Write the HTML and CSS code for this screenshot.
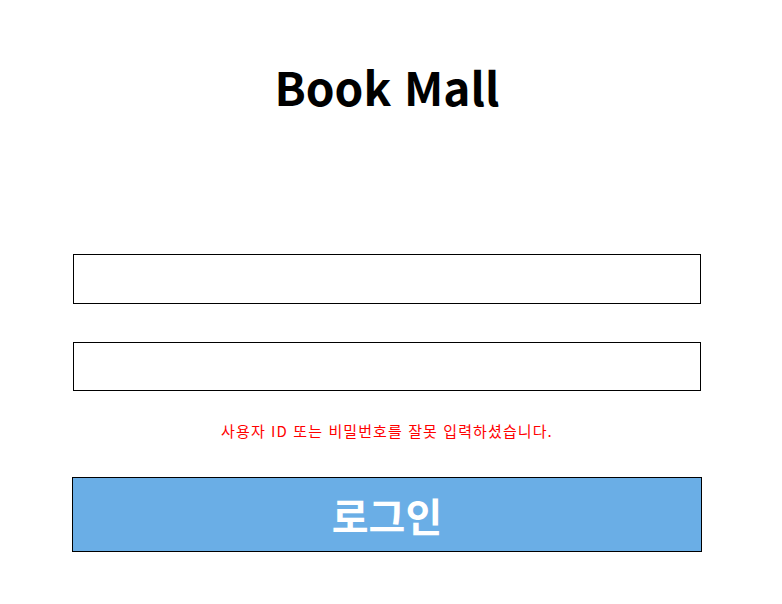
FILE: index.html
```html
<!DOCTYPE html>
<html lang="ko">
<head>
<meta charset="utf-8">
<title>Book Mall</title>
<link rel="stylesheet" href="styles.css">
</head>
<body>
<main class="login">
  <h1 class="title">Book Mall</h1>
  <form class="form">
    <input class="field field-id" type="text">
    <input class="field field-pw" type="password">
    <p class="error">사용자 ID 또는 비밀번호를 잘못 입력하셨습니다.</p>
    <button class="submit" type="button">로그인</button>
  </form>
</main>
</body>
</html>
```
FILE: styles.css
```css
html, body {
  margin: 0;
  padding: 0;
  background: #ffffff;
}
body {
  font-family: "Noto Sans CJK KR", "Noto Sans", sans-serif;
}
.login {
  width: 630px;
  margin-left: 72px;
  display: flex;
  flex-direction: column;
}
.title {
  margin: 56px 0 0;
  height: 60px;
  line-height: 60px;
  font-size: 46px;
  font-weight: 700;
  text-align: center;
  color: #000;
  letter-spacing: 0;
}
.form {
  margin-top: 138px;
  display: flex;
  flex-direction: column;
  align-items: center;
}
.field {
  box-sizing: border-box;
  width: 628px;
  height: 50px;
  margin: 0;
  border: 1px solid #000;
  border-radius: 0;
  background: #fff;
  outline: none;
  padding: 0 8px;
}
.field-pw {
  margin-top: 38px;
  height: 49px;
}
.error {
  margin: 23px 0 0;
  height: 34px;
  line-height: 34px;
  font-size: 15px;
  letter-spacing: 1.1px;
  color: #ff0000;
  text-align: center;
}
.submit {
  box-sizing: border-box;
  margin-top: 29px;
  width: 630px;
  height: 75px;
  border: 1px solid #000;
  border-radius: 0;
  background: #6aaee6;
  color: #ffffff;
  font-family: "Noto Sans CJK KR", "Noto Sans", sans-serif;
  font-size: 40px;
  font-weight: 700;
  line-height: 1;
  padding: 0;
}
```
